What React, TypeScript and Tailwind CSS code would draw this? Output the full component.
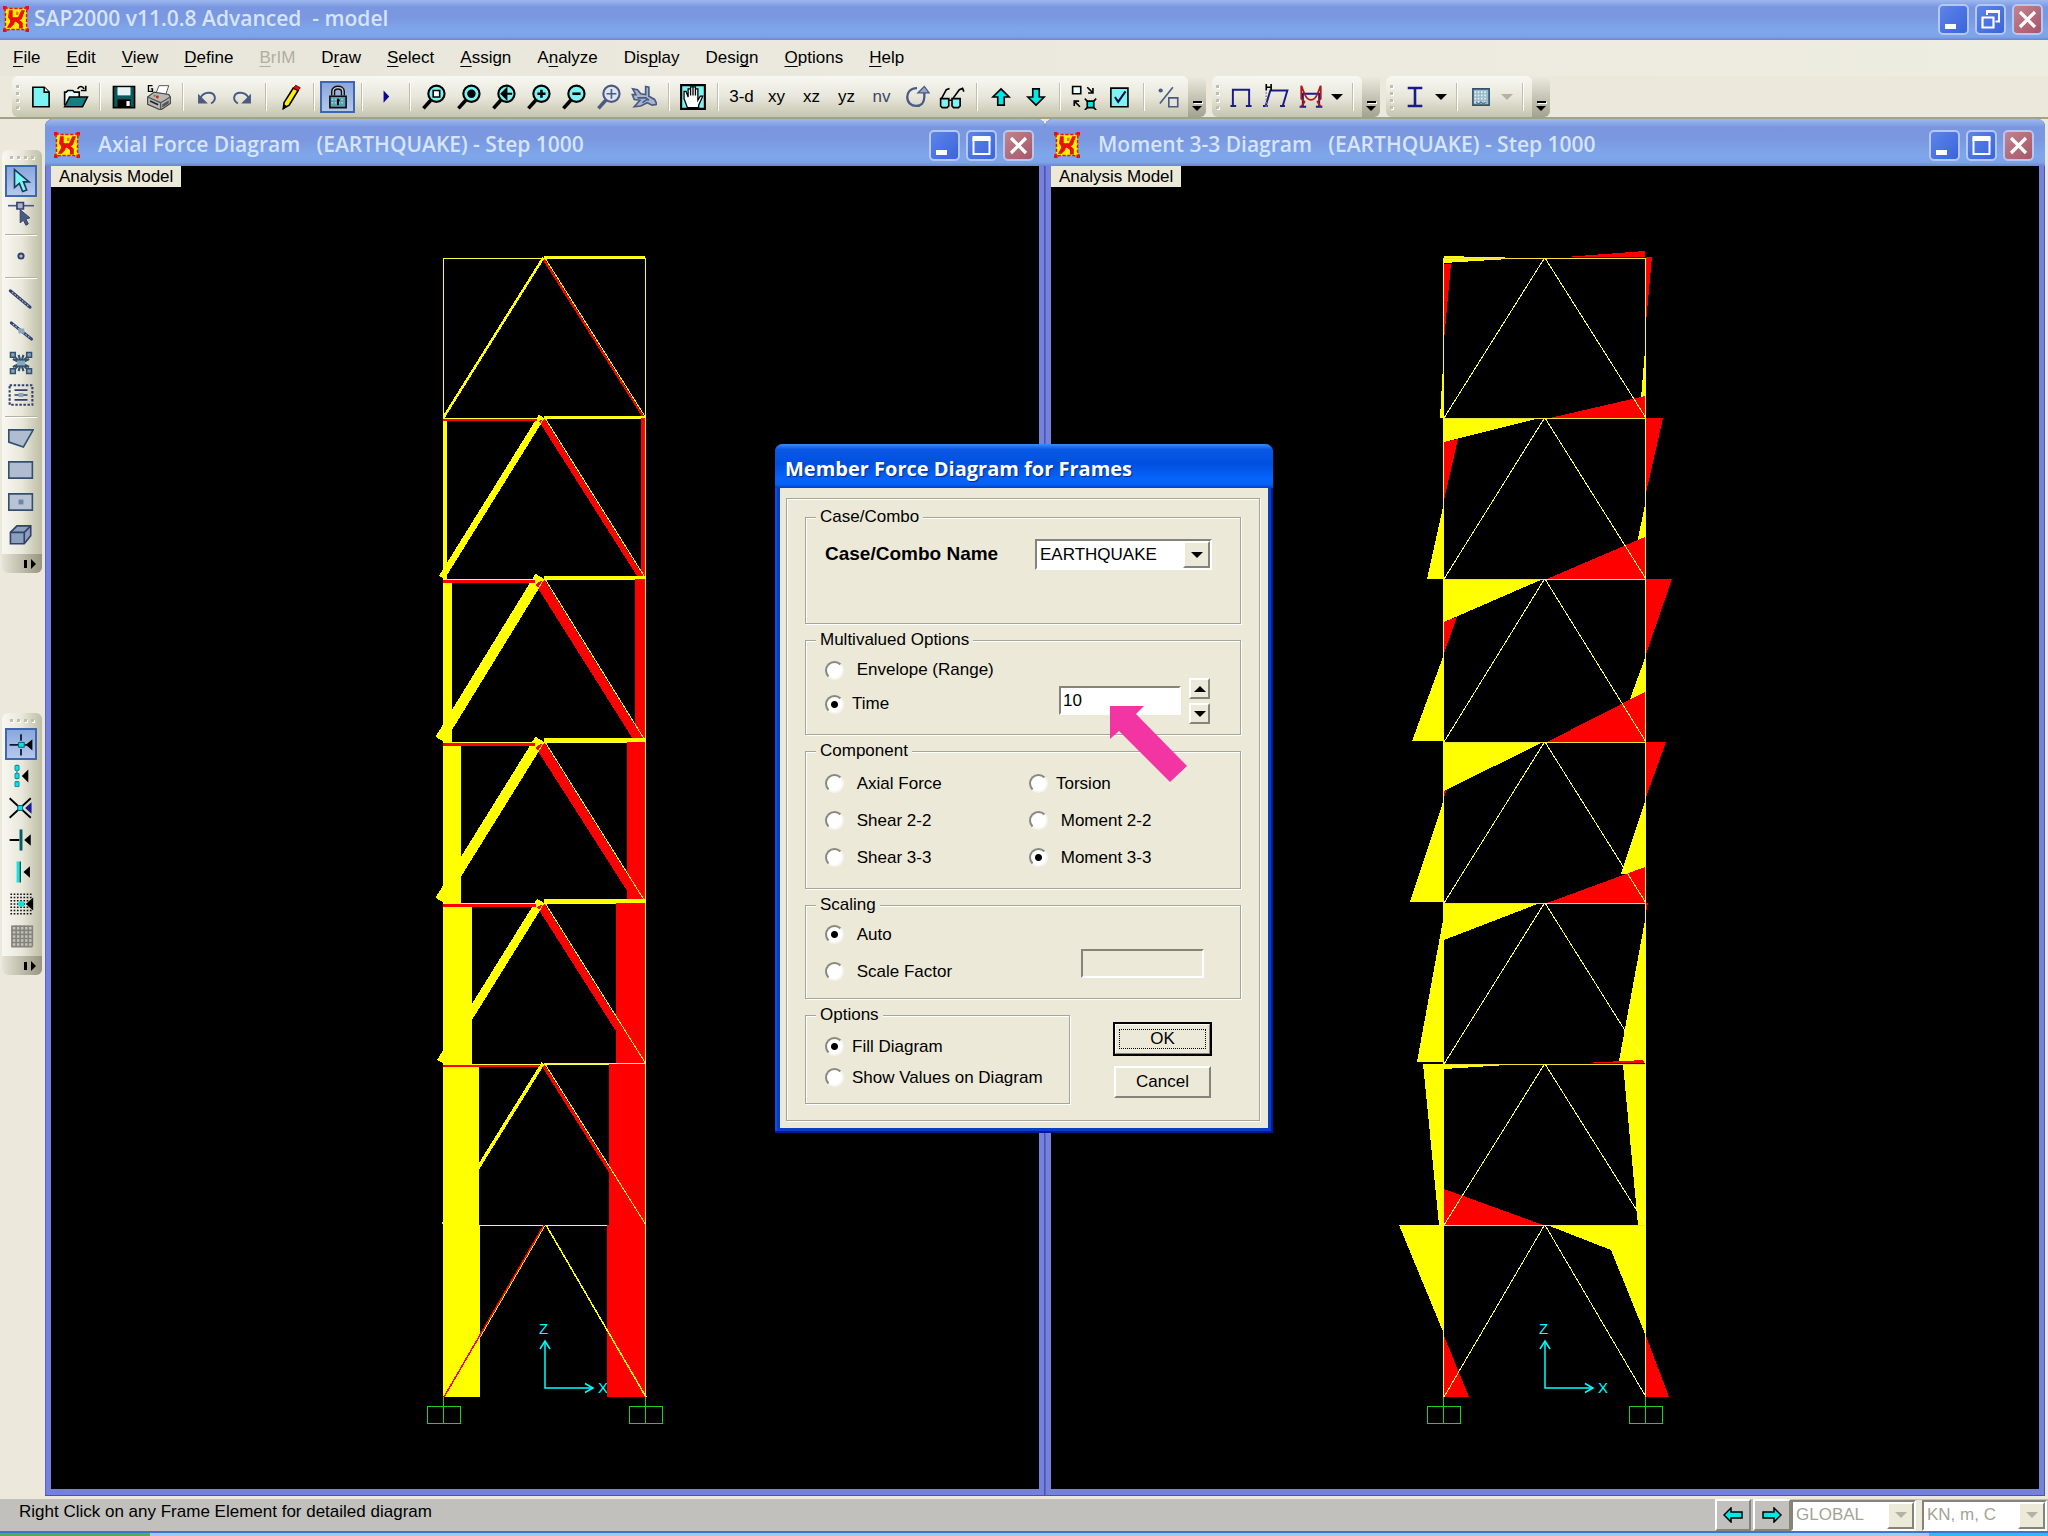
import React, { type ReactNode } from "react";

/* ---------- icons, drawn on a 16-unit grid ---------- */

const NAVY = "#1a1a8c";
const STEEL = "#4a5a82";
const CYAN = "#00e8e8";
const PALE = "#7df4f4";

function Icon({ children, size = "size-[26px]" }: { children: ReactNode; size?: string }) {
  return (
    <svg viewBox="0 0 16 16" className={`${size} shrink-0`} fill="none" aria-hidden="true">
      {children}
    </svg>
  );
}

function AppLogo() {
  return (
    <Icon>
      <path d="M1 1 4 1.500h8L15 1l-.5 3v8l.5 3-3-.5H4L1 15l.5-3V4z" fill="#ffee00" stroke="#e81010" strokeWidth=".9" strokeDasharray="2 1" />
      <path d="M0 0h2.200v2.200H0zM13.800 0H16v2.200h-2.200zM0 13.800h2.200V16H0zM13.800 13.800H16V16h-2.200z" fill="#e81010" />
      <path d="M4 3h1.600v4.200H9.500L11.500 3H13l-1.600 4.500-1.600 1.300 2 1.700v3h-1.600V11L8 9.200l-1 .3-.5 1.500L4.500 13H3l1.700-3V8.500L3.500 7z" fill="#e81010" stroke="#e81010" strokeWidth=".7" />
      <path d="M8 3.500h1.500v2H8z" fill="#f07800" />
    </Icon>
  );
}

const icons = {
  new: (
    <Icon>
      <path d="M3 2h7l3 3v9H3z" fill={PALE} stroke="#000" />
      <path d="M10 2v3h3" stroke="#000" fill="#fff" />
    </Icon>
  ),
  open: (
    <Icon>
      <path d="M1 13V5h1l1-1h3l1 1h3v3" fill="#e8ffff" stroke="#000" />
      <path d="M1 14l3-6h11l-3 6z" fill="#128080" stroke="#000" />
      <path d="M9 3c1-2 3-2 4 0m1-2v3h-3" stroke="#000" />
    </Icon>
  ),
  save: (
    <Icon>
      <path d="M1.500 1.500h13v13h-13z" fill="#0d5a5a" stroke="#000" />
      <path d="M4 2h8v5H4z" fill="#e8f4f4" />
      <path d="M4 9.500h8v5H4z" fill="#000" />
      <path d="M9.500 10.500h2v3h-2z" fill="#fff" />
    </Icon>
  ),
  print: (
    <Icon>
      <path d="M6 6l2-5h6l-2 6z" fill="#fff" stroke="#555" strokeWidth=".6" />
      <path d="M1 8l4-3 9 1.500 1 1.500v4l-6 4-8-3.500z" fill="#b8b8b4" stroke="#444" strokeWidth=".7" />
      <path d="M1 8l8 3.500 6-3.500M9 11.500V16" stroke="#555" strokeWidth=".8" />
      <path d="M2.500 10.500l5 2.200" stroke="#222" />
      <path d="M10 12.500l4-2.500v2l-4 2.500z" fill="#555" />
      <circle cx="7" cy="8" r=".9" fill="#e02020" />
      <circle cx="5.300" cy="7.300" r=".7" fill="#20b020" />
      <path d="M4 1H1.500v3.500H4V3H3" stroke="#000" strokeWidth=".8" />
    </Icon>
  ),
  undo: (
    <Icon>
      <path d="M4 8.500C6 4.500 12 4.500 12.800 8c.3 2-.5 3-2.300 4" stroke={STEEL} strokeWidth="1.200" />
      <path d="M2.500 6v6h6z" fill={STEEL} />
    </Icon>
  ),
  redo: (
    <Icon>
      <path d="M12 8.500C10 4.500 4 4.500 3.200 8c-.3 2 .5 3 2.300 4" stroke={STEEL} strokeWidth="1.200" />
      <path d="M13.500 6v6h-6z" fill={STEEL} />
    </Icon>
  ),
  pencil: (
    <Icon>
      <path d="M10 2.500l3 1.500-5.500 9L4 15l.3-3.500z" fill="#ffee00" stroke="#000" />
      <path d="M10 2.500L11.500.8l2.800 1.500L13 4z" fill="#e01010" stroke="#700" strokeWidth=".6" />
      <path d="M4 15l.2-2 1.300.8z" fill="#000" stroke="#000" />
    </Icon>
  ),
  lock: (
    <Icon>
      <path d="M5 7V4.500C5 1.500 11 1.500 11 4.500V7" stroke="#111" strokeWidth="2.600" />
      <path d="M5 7V4.500C5 1.500 11 1.500 11 4.500V7" stroke="#cfd4da" strokeWidth=".8" />
      <path d="M3 7.500h10v7H3z" fill="#5aa0b0" stroke="#111" />
      <path d="M4 9.500h8M4 11.500h8" stroke="#9ad8e0" strokeDasharray="1 1" />
      <path d="M8 9v4M8 10h1" stroke="#000" strokeWidth="1.200" />
    </Icon>
  ),
  run: (
    <Icon>
      <path d="M6.500 4v7.500L10 7.700z" fill="#0a0a90" />
    </Icon>
  ),
  plane: (
    <Icon>
      <path d="M1 3l3 .5 2 2.500 3 .5V1.500l2 .5v5.500l3.500 2 1.500 3-3 .5-3-1.500-4 2-4 .5 3.500-4L2 9.500.8 6.500H3z" fill="#a8b4cc" stroke={STEEL} />
      <path d="M4 8.500h5l2 1.500M7 11.500l3-2" stroke={STEEL} />
    </Icon>
  ),
  hand: (
    <Icon>
      <path d="M.7.700h14.600v14.600H.7z" fill={PALE} stroke="#000" strokeWidth="1.300" />
      <path d="M4.500 14.500L2.500 9V4.500h1.200L5 8V3h1.500v4V1.800H8V7V1.800h1.500V7V3H11v7l1.500-2.500H14L11.500 13v1.500z" fill="#fff" stroke="#000" strokeWidth=".8" />
    </Icon>
  ),
  rotate: (
    <Icon>
      <path d="M8 2.500C4 2.500 2 5 2 8c0 3.500 2.500 5.500 5.500 5.500s5-2 5-5.500V4" stroke={STEEL} strokeWidth="1.400" />
      <path d="M8.500 5.500l4-4 3 4z" fill="#9aa8c8" stroke={STEEL} strokeWidth=".8" />
    </Icon>
  ),
  glasses: (
    <Icon>
      <path d="M1 9h5v4.500l-1 1H2l-1-1zM8 9h5v4.500l-1 1H9l-1-1z" fill={PALE} stroke="#000" />
      <path d="M6 10h2M1.500 9l3-5.500 2-.8M8.500 9l4-5.500 2-.8.800 2" stroke="#000" />
    </Icon>
  ),
  up: (
    <Icon>
      <path d="M8 3l5 5h-3v5H6V8H3z" fill={CYAN} stroke="#000" />
    </Icon>
  ),
  down: (
    <Icon>
      <path d="M8 13l5-5h-3V3H6v5H3z" fill={CYAN} stroke="#000" />
    </Icon>
  ),
  scaleObj: (
    <Icon>
      <path d="M1 1.500h5v4.500H1z" fill="#e8ffff" stroke="#000" />
      <path d="M10 10.500h4v4h-4z" fill={CYAN} stroke="#000" />
      <path d="M8.500 9l1.500 1.500M15.500 9L14 10.500M8.500 16l1.500-1.500M15.500 16L14 14.500M10 2l3.500 3.500M13.500 2.500v3h-3M5.500 14L2 10.500M2 13.500v-3h3" stroke="#000" />
    </Icon>
  ),
  check: (
    <Icon>
      <path d="M3 2.500h10.500v11.500H3z" fill={PALE} stroke="#000" />
      <path d="M5.500 8l2 3L12 4.500" stroke="#101040" strokeWidth="1.300" />
    </Icon>
  ),
  assign: (
    <Icon>
      <path d="M11 2L3 12" stroke={STEEL} />
      <circle cx="3.500" cy="4" r="1.300" fill={STEEL} />
      <path d="M8.500 8.500H14V14H8.500z" fill="#e4e4de" stroke={STEEL} />
    </Icon>
  ),
  frame: (
    <Icon>
      <path d="M3 14V3.500h10V14M1.500 13.500H5M11 13.500h3.500" stroke={NAVY} strokeWidth="1.200" />
    </Icon>
  ),
  deformed: (
    <Icon>
      <path d="M1.500 14l3-10H15l-3 10M0 13.500h3M10.500 13.500h3" stroke={NAVY} strokeWidth="1.200" />
      <path d="M2 14V4" stroke="#888" strokeDasharray="1 1" />
      <path d="M2 0v4M5 0v4M2 2h3" stroke="#000" />
    </Icon>
  ),
  forces: (
    <Icon>
      <path d="M3 14.500V6h10v8.500M1 14h4M11 14h4" stroke={NAVY} strokeWidth="1.200" />
      <path d="M2 1l2 5c2 5 6 5 8 0l2-5M2 1v8l2 2-2 3M14 1v8l-2 2 2 3" stroke="#b01818" strokeWidth="1.100" />
    </Icon>
  ),
  section: (
    <Icon>
      <path d="M3.500 2.500h9M3.500 13.500h9" stroke={NAVY} strokeWidth="1.600" />
      <path d="M8 2v11" stroke={NAVY} strokeWidth="1.600" />
    </Icon>
  ),
  area: (
    <Icon>
      <path d="M3 3h10v10H3z" fill="#9cbccc" stroke="#34506c" />
      <path d="M4 5h8M4 7h8M4 9h8M4 11h8" stroke="#e4eef4" strokeDasharray="1 1" />
      <path d="M5 11l1.500 1.500L8 11l1.500 1.500L11 11" stroke="#5a7890" strokeWidth=".8" />
    </Icon>
  ),
  pointer: (
    <Icon>
      <path d="M4 1v11l3-2.500 2 5 2.500-1-2-5H13z" fill={PALE} stroke="#1a3a5a" />
    </Icon>
  ),
  reshape: (
    <Icon>
      <path d="M0 3.500h16" stroke={STEEL} />
      <path d="M5.500 1.500h4v4h-4z" fill="#a8b4cc" stroke="#34406c" />
      <path d="M7.500 6v8l2-1.500 1.500 3 1.500-.8-1.500-3 2.500-.7z" fill={STEEL} stroke="#34406c" strokeWidth=".6" />
    </Icon>
  ),
  point: (
    <Icon>
      <circle cx="8" cy="8" r="1.600" fill="#b4bcd0" stroke="#34406c" strokeWidth="1.200" />
    </Icon>
  ),
  line: (
    <Icon>
      <path d="M1.500 3L13.500 13" stroke="#34406c" strokeWidth="2" strokeLinecap="round" />
      <path d="M2.500 3.800l10 8.400" stroke="#a8b4cc" strokeWidth=".7" strokeDasharray="1 1" />
    </Icon>
  ),
  quickLine: (
    <Icon>
      <path d="M2 3l12.500 10" stroke="#34406c" strokeWidth="1.800" strokeLinecap="round" />
      <path d="M3 3.800l11 8.800" stroke="#b4c0d8" strokeWidth=".7" strokeDasharray="1 1" />
      <path d="M6.500 6.500h3.500v3H6.500z" fill="#88a8bc" />
    </Icon>
  ),
  braces: (
    <Icon>
      <path d="M3 3l10 10M13 3L3 13M6.500 3l3 10M9.500 3l-3 10M3 5.500l10 5M13 5.500l-10 5" stroke="#34506c" strokeWidth="1.300" />
      <path d="M1.500 1.500h3v3h-3zM11.500 1.500h3v3h-3zM1.500 11.500h3v3h-3zM11.500 11.500h3v3h-3z" fill="#88a0b8" stroke="#34506c" strokeWidth=".9" />
      <path d="M5.500 6.500h5v3h-5z" fill="#88a8bc" />
    </Icon>
  ),
  secondary: (
    <Icon>
      <path d="M1 2h14v12H1z" stroke="#34406c" strokeWidth="1.300" strokeDasharray="1.500 1" />
      <path d="M4 5h8M4 8h8M4 11h8" stroke="#34406c" />
      <path d="M6.500 6.700H9.500v2.600H6.500z" fill="#88a8bc" />
    </Icon>
  ),
  poly: (
    <Icon>
      <path d="M.5 3h15l-6 10.500L.5 10.500z" fill="#b0bcd0" stroke="#34506c" />
    </Icon>
  ),
  rect: (
    <Icon>
      <path d="M.5 3h14.500v10H.5z" fill="#b0bcd0" stroke="#34506c" />
    </Icon>
  ),
  rectQuick: (
    <Icon>
      <path d="M.5 3h14.500v10H.5z" fill="#b8c4d4" stroke="#34506c" />
      <path d="M6.500 6.500h3v3h-3z" fill="#6888a8" />
    </Icon>
  ),
  solid: (
    <Icon>
      <path d="M1.500 7l4-4h8.500v6l-4 5H1.500z" fill="#8ca0bc" stroke="#34406c" />
      <path d="M1.500 7H10l4-4M10 7v7" stroke="#34406c" />
    </Icon>
  ),
  snapJoint: (
    <Icon>
      <path d="M1 8.500h13M8 2v4M8 11v4" stroke="#101830" strokeWidth="1.100" />
      <path d="M6.500 7h3.500v3H6.500z" fill={CYAN} stroke="#0a5a6a" strokeWidth=".6" />
      <path d="M15 5v7l-4-3.500z" fill="#000" />
    </Icon>
  ),
  snapMid: (
    <Icon>
      <path d="M5.500 1v14" stroke="#0a7a8a" strokeDasharray="1 1" />
      <path d="M4.300 1.500h2.500v3H4.300zM4.300 6.500h2.500v3H4.300zM4.300 11.500h2.500v3H4.300z" fill={CYAN} stroke="#0a7a8a" strokeWidth=".5" />
      <path d="M12.500 4v8L8.500 8z" fill="#000" />
    </Icon>
  ),
  snapCross: (
    <Icon>
      <path d="M1 2l13 12M14 2L1 14" stroke="#000" strokeWidth="1.100" />
      <path d="M6 6.500h3v3H6z" fill={CYAN} stroke="#0a5a6a" strokeWidth=".6" />
      <path d="M14.500 4.500v7L10.500 8z" fill={NAVY} />
    </Icon>
  ),
  snapPerp: (
    <Icon>
      <path d="M1 8h6" stroke="#000" strokeWidth="1.200" />
      <path d="M8 1.500v13" stroke="#046060" strokeWidth="1.800" />
      <path d="M14 4.500v7L10 8z" fill="#000" />
    </Icon>
  ),
  snapLine: (
    <Icon>
      <path d="M6 1.500v13" stroke={CYAN} strokeWidth="1.400" />
      <path d="M7.500 1.500v13" stroke="#046060" />
      <path d="M13.500 4.500v7L9.500 8z" fill="#000" />
    </Icon>
  ),
  snapGrid: (
    <Icon>
      {[2, 4, 6, 8, 10, 12, 14].map((y) => (
        <path key={y} d={`M1.500 ${y}h14`} stroke="#111" strokeDasharray="1 1" />
      ))}
      <path d="M6.500 6.500h3.500v3H6.500z" fill={CYAN} />
      <path d="M15.500 4v8L11 8z" fill="#000" />
    </Icon>
  ),
  grid: (
    <Icon>
      <path d="M2 1.500h13v13H2z" fill="#c4c4bc" />
      {[2, 4.500, 7, 9.500, 12, 14.500].map((v) => (
        <path key={v} d={`M2 ${v}h13M${v + 0.5} 1.500v13`} stroke="#84847c" strokeWidth="1" />
      ))}
    </Icon>
  ),
};

function Zoom({ ink = "#000", lens = PALE, children }: { ink?: string; lens?: string; children?: ReactNode }) {
  return (
    <Icon>
      <path d="M6 10L1.500 15" stroke={ink} strokeWidth="2.200" />
      <circle cx="9.500" cy="6" r="5" fill={lens} stroke={ink} strokeWidth="1.300" />
      {children}
    </Icon>
  );
}

/* ---------- tool bars ---------- */

type ToolProps = { label: string; children: ReactNode; active?: boolean; width?: string };

function Tool({ label, children, active, width = "w-[35px]" }: ToolProps) {
  return (
    <button
      type="button"
      aria-label={label}
      title={label}
      className={`${width} flex h-8 shrink-0 items-center justify-center ${
        active ? "border-2 border-[#3f66b0] bg-linear-to-b from-[#8aa8dc] to-[#b4c8ec]" : ""
      }`}
    >
      {children}
    </button>
  );
}

function TextTool({ children, dim }: { children: string; dim?: boolean }) {
  return (
    <button type="button" className={`h-8 w-[35px] shrink-0 text-[17px] ${dim ? "text-[#3c4668]" : "text-black"}`}>
      {children}
    </button>
  );
}

const Sep = () => <span className="mx-1.5 h-7 w-px shrink-0 bg-[#c2c0ac] shadow-[1px_0_0_#fff]" />;
const WideSep = () => <span className="mr-1.5 ml-[7px] h-7 w-px shrink-0 bg-[#c2c0ac] shadow-[1px_0_0_#fff]" />;
const VSep = () => <span className="my-[5px] h-px w-8 shrink-0 bg-[#b4b29e] shadow-[0_1px_0_#fff]" />;

function Grip({ vertical }: { vertical?: boolean }) {
  return (
    <span className={vertical ? "flex gap-1" : "flex flex-col gap-1"}>
      {[0, 1, 2, 3].map((i) => (
        <span key={i} className="size-[3px] bg-[#c0beac] shadow-[1px_1px_0_#fff]" />
      ))}
    </span>
  );
}

function DropArrow({ dim }: { dim?: boolean }) {
  return (
    <svg viewBox="0 0 12 6" className="h-1.5 w-3" aria-hidden="true">
      <path d="M0 0h12L6 6z" fill={dim ? "#b4b2a4" : "#000"} />
    </svg>
  );
}

function Bar({ children }: { children: ReactNode }) {
  return (
    <div className="flex items-stretch">
      <div className="flex items-center rounded-l-md rounded-tr-md bg-linear-to-b from-[#f8f8f2] via-[#e8e7db] to-[#c6c5ae] pr-[3px] pl-1">
        <Grip />
        <div className="ml-1 flex items-center">{children}</div>
      </div>
      <button
        type="button"
        aria-label="More buttons"
        className="flex w-[18px] flex-col items-center justify-end gap-[3px] rounded-r-md bg-linear-to-b from-[#ecebe0] to-[#a5a38e] pb-1.5"
      >
        <span className="h-0.5 w-[9px] bg-black shadow-[1px_1px_0_#fff]" />
        <svg viewBox="0 0 10 5" className="h-[5px] w-2.5" aria-hidden="true">
          <path d="M0 0h10L5 5z" fill="#000" />
        </svg>
      </button>
    </div>
  );
}

function SideBar({ children }: { children: ReactNode }) {
  return (
    <div className="mr-[3px] ml-0.5 flex flex-col rounded-md bg-linear-to-r from-[#f8f8f2] via-[#e8e7db] to-[#bebda4]">
      <div className="flex h-[15px] items-center pl-2">
        <Grip vertical />
      </div>
      <div className="flex flex-col items-start pl-[3px]">{children}</div>
      <button
        type="button"
        aria-label="More buttons"
        className="mt-1 flex h-[19px] items-center justify-end gap-1 rounded-b-md bg-linear-to-r from-[#e4e3d6] to-[#98967f] pr-1.5"
      >
        <span className="h-2 w-[3px] bg-black" />
        <svg viewBox="0 0 5 10" className="h-2.5 w-[5px]" aria-hidden="true">
          <path d="M0 0v10l5-5z" fill="#000" />
        </svg>
      </button>
    </div>
  );
}

/* ---------- windows ---------- */

function WindowButtons({ restore }: { restore?: boolean }) {
  const base = "flex size-[31px] items-center justify-center rounded-[5px] border-2 border-[#b4c8f4]";
  return (
    <div className="flex gap-1.5">
      <button type="button" aria-label="Minimize" className={`${base} bg-linear-to-br from-[#5c84e8] to-[#3c64dc]`}>
        <svg viewBox="0 0 27 27" className="size-[27px]" aria-hidden="true">
          <path d="M5 18h11v5H5z" fill="#fff" />
        </svg>
      </button>
      <button type="button" aria-label={restore ? "Restore" : "Maximize"} className={`${base} bg-linear-to-br from-[#5c84e8] to-[#3c64dc]`}>
        <svg viewBox="0 0 27 27" className="size-[27px]" fill="none" stroke="#fff" aria-hidden="true">
          {restore ? (
            <>
              <path d="M10 9V5.500h12v10h-3.500" strokeWidth="2" />
              <path d="M9 5.500h14" strokeWidth="3" />
              <path d="M5.500 12v9.500h11V12M4.500 11.500h13" strokeWidth="2.200" />
            </>
          ) : (
            <>
              <path d="M5.500 6v16h16V6" strokeWidth="2" />
              <path d="M4.500 6.500h18" strokeWidth="5" />
            </>
          )}
        </svg>
      </button>
      <button type="button" aria-label="Close" className={`${base} bg-linear-to-br from-[#c08490] to-[#a85468]`}>
        <svg viewBox="0 0 27 27" className="size-[27px]" aria-hidden="true">
          <path d="M6 6l15 15M21 6L6 21" stroke="#fff" strokeWidth="3.200" />
        </svg>
      </button>
    </div>
  );
}

const titleGradient =
  "bg-[linear-gradient(180deg,#9db8f0_0%,#7a96e0_18%,#7a98e0_45%,#7fa6ea_75%,#7ea4e8_92%,#6c84d4_100%)]";
const titleText = "font-['Open_Sans','Noto_Sans',sans-serif] text-[21px] font-semibold whitespace-pre text-[#d6e4fc]";

function ModelWindow({ title, children, origin }: { title: string; children: ReactNode; origin: string }) {
  return (
    <section className="flex min-h-0 min-w-0 flex-1 flex-col overflow-hidden rounded-t-lg bg-[#7482dc] shadow-[inset_-1px_-1px_0_#4a52b4,inset_1px_0_0_#5a66c8]">
      <header className={`${titleGradient} flex h-[47px] shrink-0 items-center pt-[5px] pr-[11px] pl-[9px]`}>
        <AppLogo />
        <h2 className={`${titleText} ml-[18px] flex-1`}>{title}</h2>
        <WindowButtons />
      </header>
      <div className="relative mx-1.5 mb-[7px] flex min-h-0 flex-1 flex-col bg-black">
        <span className="absolute top-0 left-0 bg-[#ece9d8] px-2 pt-px text-[17px] leading-5 text-black">Analysis Model</span>
        <svg viewBox={origin} className="min-h-0 w-full flex-1" role="img" aria-label={title} shapeRendering="crispEdges">
          {children}
        </svg>
      </div>
    </section>
  );
}

/* ---------- frame diagrams ---------- */

const LEVELS = [258, 418, 579, 742, 903, 1064, 1225, 1397];
const YELLOW = "#ffff00";
const RED = "#ff0000";
const THIN = "#ffff50";

function Supports({ x }: { x: number }) {
  return (
    <g stroke="#20d020" fill="none" strokeWidth="1">
      {[x, x + 202].map((c) => (
        <g key={c}>
          <rect x={c - 16.5} y="1406.500" width="33" height="17" />
          <path d={`M${c - 0.5} 1397V1423`} />
        </g>
      ))}
    </g>
  );
}

function Axes({ x }: { x: number }) {
  return (
    <g stroke="#00ffff" fill="none" strokeWidth="1.500" shapeRendering="auto">
      <path d={`M${x} 1341V1388H${x + 48}`} />
      <path d={`M${x - 5} 1349L${x} 1341L${x + 5} 1349M${x + 40} 1383.500L${x + 48} 1388L${x + 40} 1392.500`} />
      <g fill="#00ffff" stroke="none" className="text-[15px]">
        <text x={x - 6} y="1334">Z</text>
        <text x={x + 53} y="1393">X</text>
      </g>
    </g>
  );
}

const storeys = [
  { left: 0, right: 1, brace: 2, beam: 3, tie: 0 },
  { left: 3, right: 4, brace: 6, beam: 3, tie: 2 },
  { left: 8, right: 10, brace: 10, beam: 4, tie: 3 },
  { left: 17, right: 18, brace: 10, beam: 5, tie: 3 },
  { left: 28, right: 29, brace: 8, beam: 5, tie: 3 },
  { left: 35, right: 36, brace: 3, beam: 2, tie: 2 },
  { left: 36, right: 38, brace: 1, beam: 0, tie: 0 },
];

function AxialDiagram() {
  return (
    <>
      {storeys.map((s, i) => {
        const top = LEVELS[i];
        const bottom = LEVELS[i + 1];
        const dx = s.brace * 0.85;
        const dy = s.brace * 0.53;
        const last = i === storeys.length - 1;
        return (
          <g key={top}>
            {s.beam > 0 && <rect x="544" y={top + 1 - s.beam} width="101" height={s.beam} fill={YELLOW} />}
            <path d={`M444 ${top + 0.5}H645`} stroke={THIN} />
            <rect x="443" y={top} width={s.left + 1} height={bottom - top} fill={YELLOW} />
            {s.right > 1 && <rect x={645 - s.right} y={top} width={s.right} height={bottom - top} fill={RED} />}
            {!last && (
              <>
                <path d={`M544 ${top}L444 ${bottom}L${444 - dx} ${bottom - dy}L${544 - dx} ${top - dy}Z`} fill={YELLOW} />
                <path d={`M544 ${top}L645 ${bottom}L${645 - dx} ${bottom + dy / 2}L${544 - dx} ${top + dy}Z`} fill={RED} />
                <path d={`M545 ${top}L646 ${bottom}`} stroke={YELLOW} strokeWidth="1" />
                <path d={`M544 ${top}L444 ${bottom}`} stroke={YELLOW} strokeWidth="1" />
              </>
            )}
            {last && (
              <>
                <path d={`M545 ${top}L445 ${bottom}`} stroke={YELLOW} strokeWidth="1.500" />
                <path d={`M544 ${top}L444 ${bottom}`} stroke={RED} strokeWidth="1.500" />
                <path d={`M546 ${top}L646 ${bottom}`} stroke={YELLOW} strokeWidth="1.500" />
              </>
            )}
            {s.tie > 0 && <rect x="443" y={top + 1} width={98 - s.brace * 0.6} height={s.tie} fill={RED} />}
          </g>
        );
      })}
      <path d="M645.500 258V1397" stroke={YELLOW} />
      <Supports x={444} />
      <Axes x={545} />
    </>
  );
}

const momentYellow = [
  "1444,256 1525,258 1444,263",
  "1443,365 1440,418 1444,418",
  "1645,350 1641,398 1645,398",
  "1444,418 1540,418 1444,442",
  "1443,507 1427,579 1444,579",
  "1645,505 1637,543 1645,543",
  "1444,579 1543,579 1444,622",
  "1443,657 1412,741 1444,741",
  "1645,658 1630,699 1645,699",
  "1444,742 1543,742 1444,791",
  "1443,802 1410,902 1444,902",
  "1645,802 1621,874 1645,874",
  "1444,903 1540,903 1444,940",
  "1443,920 1417,1062 1444,1062",
  "1645,920 1619,1061 1645,1061",
  "1444,1064 1523,1064 1444,1069",
  "1423,1064 1444,1064 1444,1225 1439,1225",
  "1623,1064 1645,1064 1645,1225 1638,1225",
  "1399,1225 1444,1225 1444,1334",
  "1547,1225 1645,1225 1645,1334 1611,1250",
];

const momentRed = [
  "1565,257 1645,251 1645,257",
  "1444,264 1451,264 1444,340",
  "1646,257 1652,257 1646,322",
  "1550,418 1645,396 1645,418",
  "1444,442 1458,439 1444,500",
  "1646,418 1663,418 1646,493",
  "1547,579 1645,537 1645,579",
  "1444,622 1457,617 1444,653",
  "1646,579 1672,579 1646,654",
  "1547,742 1645,692 1645,742",
  "1444,791 1447,790 1444,797",
  "1646,742 1666,742 1646,797",
  "1547,903 1645,867 1645,903",
  "1646,903 1648,903 1646,912",
  "1583,1063 1644,1060 1644,1063",
  "1444,1189 1543,1225 1444,1225",
  "1444,1336 1469,1397 1444,1397",
  "1646,1336 1669,1397 1646,1397",
];

function MomentDiagram() {
  return (
    <>
      {momentYellow.map((p) => (
        <polygon key={p} points={p} fill={YELLOW} />
      ))}
      {momentRed.map((p) => (
        <polygon key={p} points={p} fill={RED} />
      ))}
      {LEVELS.slice(0, -1).map((y, i) => (
        <g key={y}>
          <path d={`M1444 ${y + 0.5}H1645`} stroke="#f0e040" />
          <path d={`M1544.500 ${y}L1444 ${LEVELS[i + 1]}M1545 ${y}L1646 ${LEVELS[i + 1]}`} stroke={THIN} strokeWidth="1" />
        </g>
      ))}
      <path d="M1443.500 258V1397M1645.500 258V1397" stroke={YELLOW} />
      <Supports x={1444} />
      <Axes x={1545} />
    </>
  );
}

/* ---------- dialog ---------- */

const sunken =
  "border-2 border-t-[#85837a] border-l-[#85837a] border-r-white border-b-white outline-none";
const raised =
  "bg-[#ece9d8] border-2 border-t-white border-l-white border-r-[#85837a] border-b-[#85837a]";

function Group({ legend, children, className = "" }: { legend: string; children: ReactNode; className?: string }) {
  return (
    <fieldset className="min-w-0 border border-[#a7a594] shadow-[1px_1px_0_#fff,inset_1px_1px_0_#fff]">
      <legend className="ml-2.5 bg-[#ece9d8] px-1 leading-5">{legend}</legend>
      <div className={className}>{children}</div>
    </fieldset>
  );
}

type RadioProps = { group: string; children: string; checked?: boolean; height?: string };

function Radio({ group, children, checked, height = "h-[37px]" }: RadioProps) {
  return (
    <label className={`${height} flex items-center gap-2 whitespace-pre`}>
      <input
        type="radio"
        name={group}
        defaultChecked={checked}
        className="size-[19px] shrink-0 appearance-none rounded-full border-2 border-t-[#8a887c] border-r-[#f6f5ee] border-b-[#f6f5ee] border-l-[#8a887c] bg-white checked:bg-[radial-gradient(circle,#000_3px,#fff_4px)]"
      />
      {children}
    </label>
  );
}

function Combo({ id, value, label, dim, width }: { id: string; value: string; label?: string; dim?: boolean; width: string }) {
  return (
    <div className={`relative ${width}`}>
      <select
        id={id}
        aria-label={label}
        disabled={dim}
        className={`${sunken} h-[31px] w-full appearance-none bg-white pl-[3px] text-[17px] opacity-100 ${dim ? "text-[#a5a394]" : "text-black"}`}
      >
        <option>{value}</option>
      </select>
      <span className={`${raised} pointer-events-none absolute top-0.5 right-0.5 flex h-[27px] w-[27px] items-center justify-center`}>
        <DropArrow dim={dim} />
      </span>
    </div>
  );
}

function ForceDialog() {
  return (
    <div
      role="dialog"
      aria-labelledby="dialog-title"
      className="absolute top-[444px] left-1/2 flex w-[498px] -translate-x-1/2 flex-col rounded-t-lg bg-[#0a3cc8] px-[5px] pb-[5px] shadow-[inset_0_-2px_0_#001890,inset_-2px_0_0_#001890,inset_2px_0_0_#0c50e0]"
    >
      <header className="-mx-[5px] flex h-11 items-center rounded-t-lg bg-[linear-gradient(180deg,#3c8cf8_0%,#0a58e4_12%,#0050e0_45%,#0664fc_80%,#0660f4_92%,#0040c0_100%)] pt-1.5 pl-2.5">
        <h1 id="dialog-title" className="font-['Open_Sans','Noto_Sans',sans-serif] text-[20px] font-bold text-white [text-shadow:1px_1px_1px_#0a2a80]">
          Member Force Diagram for Frames
        </h1>
      </header>
      <form className="flex flex-col bg-[#ece9d8] pt-2.5 pr-2 pb-[7px] pl-1.5 text-[17px] text-black" onSubmit={(e) => e.preventDefault()}>
        <div className="flex flex-col gap-1.5 border border-[#a7a594] px-[18px] pt-2 pb-4 shadow-[1px_1px_0_#fff,inset_1px_1px_0_#fff]">
          <Group legend="Case/Combo" className="flex items-center justify-between pt-3 pr-7 pb-[53px] pl-[19px]">
            <label htmlFor="case" className="text-[19px] font-bold">
              Case/Combo Name
            </label>
            <Combo id="case" value="EARTHQUAKE" width="w-[177px]" />
          </Group>

          <Group legend="Multivalued Options" className="flex items-start justify-between pt-[3px] pr-[30px] pb-2.5 pl-[19px]">
            <div>
              <Radio group="multi" height="h-[34px]">{"\u00a0Envelope (Range)"}</Radio>
              <Radio group="multi" height="h-[34px]" checked>Time</Radio>
            </div>
            <div className="mt-[25px] flex gap-2">
              <input aria-label="Time" defaultValue="10" className={`${sunken} mt-2 h-[29px] w-[122px] bg-white pl-0.5`} />
              <div className="flex flex-col gap-1">
                <button type="button" aria-label="Increase" className={`${raised} flex h-[21px] w-[21px] items-center justify-center`}>
                  <span className="rotate-180"><DropArrow /></span>
                </button>
                <button type="button" aria-label="Decrease" className={`${raised} flex h-[21px] w-[21px] items-center justify-center`}>
                  <DropArrow />
                </button>
              </div>
            </div>
          </Group>

          <Group legend="Component" className="grid grid-cols-[204px_1fr] pt-1 pb-3 pl-[19px]">
            <Radio group="component">{"\u00a0Axial Force"}</Radio>
            <Radio group="component">Torsion</Radio>
            <Radio group="component">{"\u00a0Shear 2-2"}</Radio>
            <Radio group="component">{"\u00a0Moment 2-2"}</Radio>
            <Radio group="component">{"\u00a0Shear 3-3"}</Radio>
            <Radio group="component" checked>{"\u00a0Moment 3-3"}</Radio>
          </Group>

          <Group legend="Scaling" className="flex items-end justify-between pt-px pr-9 pb-2 pl-[19px]">
            <div>
              <Radio group="scaling" checked>{"\u00a0Auto"}</Radio>
              <Radio group="scaling">{"\u00a0Scale Factor"}</Radio>
            </div>
            <input aria-label="Scale Factor" disabled className={`${sunken} mb-3 h-[29px] w-[123px] bg-[#ece9d8]`} />
          </Group>

          <div className="flex items-start justify-between">
            <Group legend="Options" className="pt-1.5 pr-[26px] pb-2.5 pl-[19px]">
              <Radio group="options" height="h-[31px]" checked>Fill Diagram</Radio>
              <Radio group="options" height="h-[31px]">Show Values on Diagram</Radio>
            </Group>
            <div className="mt-[18px] mr-[30px] flex flex-col gap-[11px]">
              <button type="submit" className={`${raised} flex h-8 w-[97px] items-center justify-center p-[3px] outline-2 -outline-offset-1 outline-black`}>
                <span className="flex h-5 w-full items-center justify-center border border-dotted border-black leading-4">OK</span>
              </button>
              <button type="button" className={`${raised} h-8 w-[97px] leading-6`}>Cancel</button>
            </div>
          </div>
        </div>
      </form>
    </div>
  );
}

/* ---------- page ---------- */

const menus: [string, string, string][] = [
  ["", "F", "ile"],
  ["", "E", "dit"],
  ["", "V", "iew"],
  ["", "D", "efine"],
  ["", "B", "rIM"],
  ["D", "r", "aw"],
  ["", "S", "elect"],
  ["", "A", "ssign"],
  ["A", "n", "alyze"],
  ["Dis", "p", "lay"],
  ["Desi", "g", "n"],
  ["", "O", "ptions"],
  ["", "H", "elp"],
];

export default function App() {
  return (
    <div className="relative flex h-screen min-h-[1200px] w-full flex-col overflow-hidden bg-[#ece9dc] font-['Liberation_Sans',Arial,sans-serif] text-black">
      <header className={`${titleGradient} flex h-10 shrink-0 items-center pr-[5px] pb-0.5 pl-[3px]`}>
        <AppLogo />
        <h1 className={`${titleText} ml-[5px] flex-1`}>{"SAP2000 v11.0.8 Advanced  - model"}</h1>
        <WindowButtons restore />
      </header>

      <nav className="flex h-9 shrink-0 items-center bg-linear-to-r from-[#e8e6da] to-[#eeede2] text-[17px]">
        {menus.map(([a, key, b]) => (
          <button key={a + key + b} type="button" disabled={b === "rIM"} className="px-[13px] disabled:text-[#b0aea0]">
            {a}
            <span className="underline underline-offset-[3px]">{key}</span>
            {b}
          </button>
        ))}
      </nav>

      <div className="flex h-[41px] shrink-0 gap-1.5 pl-3">
        <Bar>
          <Tool label="New Model">{icons.new}</Tool>
          <Tool label="Open">{icons.open}</Tool>
          <Sep />
          <Tool label="Save">{icons.save}</Tool>
          <Tool label="Print">{icons.print}</Tool>
          <Sep />
          <Tool label="Undo">{icons.undo}</Tool>
          <Tool label="Redo">{icons.redo}</Tool>
          <Sep />
          <Tool label="Refresh Window">{icons.pencil}</Tool>
          <Sep />
          <Tool label="Lock Model" active>{icons.lock}</Tool>
          <Sep />
          <Tool label="Run Analysis">{icons.run}</Tool>
          <Sep />
          <Tool label="Rubber Band Zoom">
            <Zoom><path d="M7.500 4h4v4h-4z" fill="#fff" stroke="#000" /></Zoom>
          </Tool>
          <Tool label="Full View">
            <Zoom><circle cx="9.500" cy="6" r="2.600" fill="#000" /></Zoom>
          </Tool>
          <Tool label="Previous Zoom">
            <Zoom><path d="M13 6H8M9.500 3L6.500 6l3 3z" fill="#000" stroke="#000" strokeWidth="1.200" /></Zoom>
          </Tool>
          <Tool label="Zoom In">
            <Zoom><path d="M9.500 3.500v5M7 6h5" stroke="#000" strokeWidth="1.600" /></Zoom>
          </Tool>
          <Tool label="Zoom Out">
            <Zoom><path d="M7 6h5" stroke="#000" strokeWidth="1.600" /></Zoom>
          </Tool>
          <Tool label="Zoom Window">
            <Zoom ink={STEEL} lens="#dce4ee"><path d="M9.500 3v6M6.500 6h6" stroke={STEEL} /></Zoom>
          </Tool>
          <Tool label="Fly">{icons.plane}</Tool>
          <WideSep />
          <Tool label="Pan">{icons.hand}</Tool>
          <WideSep />
          <TextTool>3-d</TextTool>
          <TextTool>xy</TextTool>
          <TextTool>xz</TextTool>
          <TextTool>yz</TextTool>
          <TextTool dim>nv</TextTool>
          <Tool label="Rotate View">{icons.rotate}</Tool>
          <Tool label="Perspective">{icons.glasses}</Tool>
          <WideSep />
          <Tool label="Move Up">{icons.up}</Tool>
          <Tool label="Move Down">{icons.down}</Tool>
          <Sep />
          <Tool label="Object Shrink">{icons.scaleObj}</Tool>
          <Tool label="Display Options">{icons.check}</Tool>
          <WideSep />
          <Tool label="Assign">{icons.assign}</Tool>
        </Bar>
        <Bar>
          <Tool label="Undeformed Shape">{icons.frame}</Tool>
          <Tool label="Deformed Shape">{icons.deformed}</Tool>
          <Tool label="Member Forces">{icons.forces}</Tool>
          <Tool label="Forces Menu" width="w-[18px]"><DropArrow /></Tool>
          <Sep />
        </Bar>
        <Bar>
          <Tool label="Frame Design">{icons.section}</Tool>
          <Tool label="Frame Design Menu" width="w-[18px]"><DropArrow /></Tool>
          <Sep />
          <Tool label="Shell Design">{icons.area}</Tool>
          <Tool label="Shell Design Menu" width="w-[18px]"><DropArrow dim /></Tool>
          <Sep />
        </Bar>
      </div>

      <main className="flex min-h-0 flex-1 border-t-2 border-[#a3a188] pr-[3px] pb-[3px]">
        <aside className="flex w-[45px] shrink-0 flex-col pt-[31px]">
          <SideBar>
            <Tool label="Select" width="w-8" active>{icons.pointer}</Tool>
            <Tool label="Reshape" width="w-8">{icons.reshape}</Tool>
            <VSep />
            <Tool label="Draw Joint" width="w-8">{icons.point}</Tool>
            <VSep />
            <Tool label="Draw Frame" width="w-8">{icons.line}</Tool>
            <Tool label="Quick Draw Frame" width="w-8">{icons.quickLine}</Tool>
            <Tool label="Quick Draw Braces" width="w-8">{icons.braces}</Tool>
            <Tool label="Quick Draw Secondary Beams" width="w-8">{icons.secondary}</Tool>
            <VSep />
            <Tool label="Draw Poly Area" width="w-8">{icons.poly}</Tool>
            <Tool label="Draw Rectangular Area" width="w-8">{icons.rect}</Tool>
            <Tool label="Quick Draw Area" width="w-8">{icons.rectQuick}</Tool>
            <Tool label="Draw Solid" width="w-8">{icons.solid}</Tool>
          </SideBar>
          <div className="h-[140px] shrink-0" />
          <SideBar>
            <Tool label="Snap to Joints" width="w-8" active>{icons.snapJoint}</Tool>
            <Tool label="Snap to Midpoints" width="w-8">{icons.snapMid}</Tool>
            <Tool label="Snap to Intersections" width="w-8">{icons.snapCross}</Tool>
            <Tool label="Snap to Perpendicular" width="w-8">{icons.snapPerp}</Tool>
            <Tool label="Snap to Lines" width="w-8">{icons.snapLine}</Tool>
            <Tool label="Snap to Fine Grid" width="w-8">{icons.snapGrid}</Tool>
            <Tool label="Grid" width="w-8">{icons.grid}</Tool>
          </SideBar>
        </aside>
        <ModelWindow title={"Axial Force Diagram   (EARTHQUAKE) - Step 1000"} origin="51 166 988 1323">
          <AxialDiagram />
        </ModelWindow>
        <ModelWindow title={"Moment 3-3 Diagram   (EARTHQUAKE) - Step 1000"} origin="1051 166 988 1323">
          <MomentDiagram />
        </ModelWindow>
      </main>

      <footer className="flex h-8 shrink-0 items-center bg-[#c1c0bd] pr-px text-[17px]">
        <p className="flex-1 pb-1.5 pl-[19px]">Right Click on any Frame Element for detailed diagram</p>
        <button type="button" aria-label="Previous step" className="mr-0.5 flex h-8 w-9 items-center justify-center border-2 border-t-white border-r-[#85837a] border-b-[#85837a] border-l-white">
          <svg viewBox="0 0 20 16" className="h-4 w-5" aria-hidden="true">
            <path d="M1 8l7-7v4h11v6H8v4z" fill={CYAN} stroke="#000" strokeWidth="1.500" />
          </svg>
        </button>
        <button type="button" aria-label="Next step" className="flex h-8 w-[38px] items-center justify-center border-2 border-t-white border-r-[#85837a] border-b-[#85837a] border-l-white">
          <svg viewBox="0 0 20 16" className="h-4 w-5" aria-hidden="true">
            <path d="M19 8l-7-7v4H1v6h11v4z" fill={CYAN} stroke="#000" strokeWidth="1.500" />
          </svg>
        </button>
        <div className="flex gap-1.5 bg-[#ece9d8]">
          <Combo id="csys" value="GLOBAL" label="Coordinate system" dim width="w-[125px]" />
          <Combo id="units" value="KN, m, C" label="Units" dim width="w-[125px]" />
        </div>
      </footer>
      <div className="flex h-[5px] shrink-0 border-t-2 border-[#3a74d0] bg-[#a4c8f4]">
        <span className="w-[150px] bg-[#4cb04c]" />
        <span className="flex-1" />
        <span className="w-[119px] bg-[#30b8f8]" />
      </div>

      <ForceDialog />
      <svg viewBox="0 0 77 77" className="pointer-events-none absolute top-[706px] left-1/2 ml-[86px] size-[77px]" aria-hidden="true">
        <path d="M0 0h34l-8 8 51 52-17 16L9 25l-9 8z" fill="#f235a2" />
      </svg>
    </div>
  );
}
